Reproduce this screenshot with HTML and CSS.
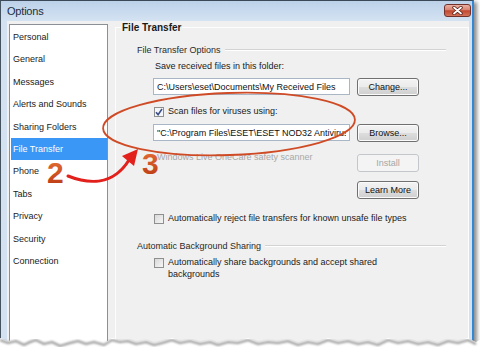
FILE: index.html
```html
<!DOCTYPE html>
<html lang="en">
<head>
    <meta charset="UTF-8">
    <meta name="viewport" content="width=device-width, initial-scale=1.0">
    <title>Options</title>
    <link rel="stylesheet" href="styles.css">
</head>
<body>
    <div class="shot">
        <div class="window">
            <div class="titlebar">
                <span class="title">Options</span>
                <span class="close">
                    <svg width="11" height="9" viewBox="0 0 11 9">
                        <path d="M2 1.5 L9 7.5 M9 1.5 L2 7.5" stroke="#5a1d16" stroke-width="3.4" stroke-linecap="round"/>
                        <path d="M2 1.5 L9 7.5 M9 1.5 L2 7.5" stroke="#fff" stroke-width="1.8" stroke-linecap="round"/>
                    </svg>
                </span>
            </div>
            <div class="client">
                <ul class="nav">
                    <li>Personal</li>
                    <li>General</li>
                    <li>Messages</li>
                    <li>Alerts and Sounds</li>
                    <li>Sharing Folders</li>
                    <li class="selected">File Transfer</li>
                    <li>Phone</li>
                    <li>Tabs</li>
                    <li>Privacy</li>
                    <li>Security</li>
                    <li>Connection</li>
                </ul>
                <fieldset class="panel">
                    <legend>File Transfer</legend>
                    <div class="panel-body">
                        <div class="group-title">File Transfer Options</div>
                        <p class="label">Save received files in this folder:</p>
                        <div class="field-row">
                            <input class="field" type="text" value="C:\Users\eset\Documents\My Received Files" readonly>
                            <button>Change...</button>
                        </div>
                        <div class="check-row scan">
                            <span class="check checked">
                                <svg width="8" height="8" viewBox="0 0 8 8"><path d="M1 4.2 L3.1 6.6 L7 1" stroke="#3c5088" stroke-width="1.6" fill="none"/></svg>
                            </span>
                            <span>Scan files for viruses using:</span>
                        </div>
                        <div class="field-row">
                            <input class="field" type="text" value="&quot;C:\Program Files\ESET\ESET NOD32 Antivirus\nod32.exe&quot;" readonly>
                            <button>Browse...</button>
                        </div>
                        <div class="scanner-row">
                            <span class="disabled-text">Windows Live OneCare safety scanner</span>
                            <button disabled>Install</button>
                        </div>
                        <div class="more-row">
                            <button>Learn More</button>
                        </div>
                        <div class="check-row reject">
                            <span class="check"></span>
                            <span>Automatically reject file transfers for known unsafe file types</span>
                        </div>
                        <div class="group-title second">Automatic Background Sharing</div>
                        <div class="check-row share">
                            <span class="check"></span>
                            <span class="wrap">Automatically share backgrounds and accept shared backgrounds</span>
                        </div>
                    </div>
                </fieldset>
            </div>
        </div>

        <svg class="notes" width="480" height="355" viewBox="0 0 480 355">
            <defs>
                <linearGradient id="digit" x1="0" y1="0" x2="0" y2="1">
                    <stop offset="0" stop-color="#e8733a"/>
                    <stop offset="1" stop-color="#b8360f"/>
                </linearGradient>
            </defs>
            <ellipse cx="229" cy="124" rx="126" ry="31" transform="rotate(-2 229 124)" fill="none" stroke="#cf4b26" stroke-width="1.8"/>
            <text x="47" y="183" class="digit" fill="url(#digit)">2</text>
            <text x="142" y="174" class="digit" fill="url(#digit)">3</text>
            <path d="M68 176 C88 184, 113 186, 129 160" fill="none" stroke="#e2211c" stroke-width="3" stroke-linecap="round"/>
            <polygon points="138,149 122,156 134,166" fill="#e2211c"/>
        </svg>

        <svg class="torn" width="480" height="25" viewBox="0 0 480 25">
            <defs>
                <filter id="soft"><feGaussianBlur stdDeviation="1.3"/></filter>
            </defs>
            <path d="M0 8 L8 11 L16 9 L24 13 L30 10 L36 8 L44 12 L52 10 L60 14 L70 11 L78 9 L86 12 L94 10 L104 13 L112 8 L120 10 L128 9 L136 12 L146 10 L154 13 L162 11 L172 8 L180 11 L190 9 L200 12 L210 10 L218 13 L228 10 L238 11 L248 8 L258 12 L268 10 L278 11 L288 9 L298 13 L308 10 L318 12 L328 8 L338 11 L348 9 L358 12 L368 10 L378 13 L388 8 L398 11 L408 9 L418 12 L428 10 L438 13 L448 9 L458 11 L468 8 L476 12 L480 10 L480 25 L0 25 Z" fill="#fff"/>
            <path d="M0 10 L8 13 L16 11 L24 15 L30 12 L36 10 L44 14 L52 12 L60 16 L70 13 L78 11 L86 14 L94 12 L104 15 L112 10 L120 12 L128 11 L136 14 L146 12 L154 15 L162 13 L172 10 L180 13 L190 11 L200 14 L210 12 L218 15 L228 12 L238 13 L248 10 L258 14 L268 12 L278 13 L288 11 L298 15 L308 12 L318 14 L328 10 L338 13 L348 11 L358 14 L368 12 L378 15 L388 10 L398 13 L408 11 L418 14 L428 12 L438 15 L448 11 L458 13 L468 10 L476 14" fill="none" stroke="#6d6d6d" stroke-width="2" filter="url(#soft)" opacity="0.75"/>
        </svg>
    </div>
</body>
</html>
```

FILE: styles.css
```css
body {
    margin: 0;
    background: #fff;
    font-family: "Liberation Sans", Arial, sans-serif;
    font-size: 9px;
    line-height: 12px;
    color: #1a1a1a;
}
.shot {
    position: relative;
    width: 480px;
    height: 355px;
    overflow: hidden;
}
.window {
    display: flex;
    flex-direction: column;
    width: 474px;
    height: 352px;
    box-sizing: border-box;
    border-top: 1px solid #3a4857;
    border-left: 1px solid #44525f;
    border-right: 2px solid #3487d4;
    background: #d3e1f0;
    box-shadow: 3px 2px 4px rgba(0, 0, 0, 0.45);
}
.titlebar {
    display: flex;
    justify-content: space-between;
    height: 20px;
    padding: 0 1px 0 6px;
    background: linear-gradient(#bcd1e9, #d4e3f2);
}
.title {
    font-size: 11px;
    line-height: 20px;
    color: #1c2d40;
    letter-spacing: -0.2px;
}
.close {
    display: flex;
    align-items: center;
    justify-content: center;
    width: 27px;
    height: 13px;
    margin-top: 3px;
    box-sizing: border-box;
    border: 1px solid #70322a;
    border-radius: 3px;
    background: linear-gradient(#eab0a2 0%, #d98371 45%, #c1472e 52%, #d3735b 100%);
}
.client {
    flex: 1;
    display: flex;
    margin: 0 3px 0 6px;
    background: #f0f0f0;
}
.nav {
    list-style: none;
    width: 99px;
    margin: 3px 0 0 2px;
    padding: 1px 0 0 1px;
    box-sizing: border-box;
    border: 1px solid #8b9097;
    background: #fff;
}
.nav li {
    line-height: 22.4px;
    padding-left: 2px;
    white-space: nowrap;
}
.nav .selected {
    background: #3a97f5;
    color: #fff;
}
.panel {
    flex: 1;
    min-width: 0;
    margin: 0 0 0 7px;
    padding: 10px 22px 0 5px;
    border: 1px solid #fdfdfd;
}
.panel legend {
    padding: 0 1px;
    font-size: 10px;
    font-weight: bold;
    line-height: 13px;
    color: #1a1a1a;
}
.panel-body {
    margin-left: 16px;
}
.group-title {
    display: flex;
    align-items: center;
    gap: 4px;
    color: #2a2a2a;
}
.group-title::after {
    content: "";
    flex: 1;
    border-top: 1px solid #d3d3d3;
    border-bottom: 1px solid #fff;
}
.group-title.second {
    margin-top: 15px;
}
.label {
    margin: 4px 0 0 18px;
}
.field-row {
    display: grid;
    grid-template-columns: 197px 62px;
    column-gap: 7px;
    align-items: start;
    margin: 6px 0 0 16px;
}
.field {
    width: 197px;
    height: 17px;
    box-sizing: border-box;
    margin: 0;
    padding: 0 3px;
    border: 1px solid #a9b6c6;
    background: #fff;
    font: inherit;
    color: #111;
    outline: none;
}
button {
    height: 18px;
    margin: 0;
    padding: 0;
    font: inherit;
    color: #111;
    border: 1px solid #707070;
    border-radius: 3px;
    background: linear-gradient(#f3f3f3 0%, #ebebeb 50%, #dddddd 51%, #cfcfcf 100%);
    box-shadow: inset 0 0 0 1px #fbfbfb;
}
button:disabled {
    color: #a6a6a6;
    border-color: #c3c7cb;
    background: #f4f4f4;
    box-shadow: none;
}
.check-row {
    display: flex;
    align-items: center;
    gap: 4px;
    margin-left: 17px;
    line-height: 13px;
}
.check-row.scan {
    margin-top: 9px;
}
.check-row.reject {
    margin-top: 13px;
}
.check-row.share {
    align-items: flex-start;
    margin-top: 4px;
    line-height: 12px;
}
.check-row.share .check {
    margin-top: 2px;
}
.wrap {
    max-width: 230px;
}
.check {
    display: flex;
    align-items: center;
    justify-content: center;
    flex: none;
    width: 10px;
    height: 10px;
    box-sizing: border-box;
    border: 1px solid #8e8f8f;
    background: linear-gradient(135deg, #d8d8d8, #f6f6f6);
}
.check.checked {
    background: #f4f6fa;
}
.scanner-row {
    display: grid;
    grid-template-columns: 220px 62px;
    margin-top: 9px;
}
.scanner-row button {
    margin-top: 3px;
}
.disabled-text {
    padding-left: 20px;
    color: #a8a8a8;
    white-space: nowrap;
}
.more-row {
    display: grid;
    grid-template-columns: 62px;
    margin: 9px 0 0 220px;
}
.notes {
    position: absolute;
    left: 0;
    top: 0;
    pointer-events: none;
}
.digit {
    font-family: "Liberation Sans", Arial, sans-serif;
    font-size: 30px;
    font-weight: bold;
}
.torn {
    position: absolute;
    left: 0;
    top: 330px;
}
```
